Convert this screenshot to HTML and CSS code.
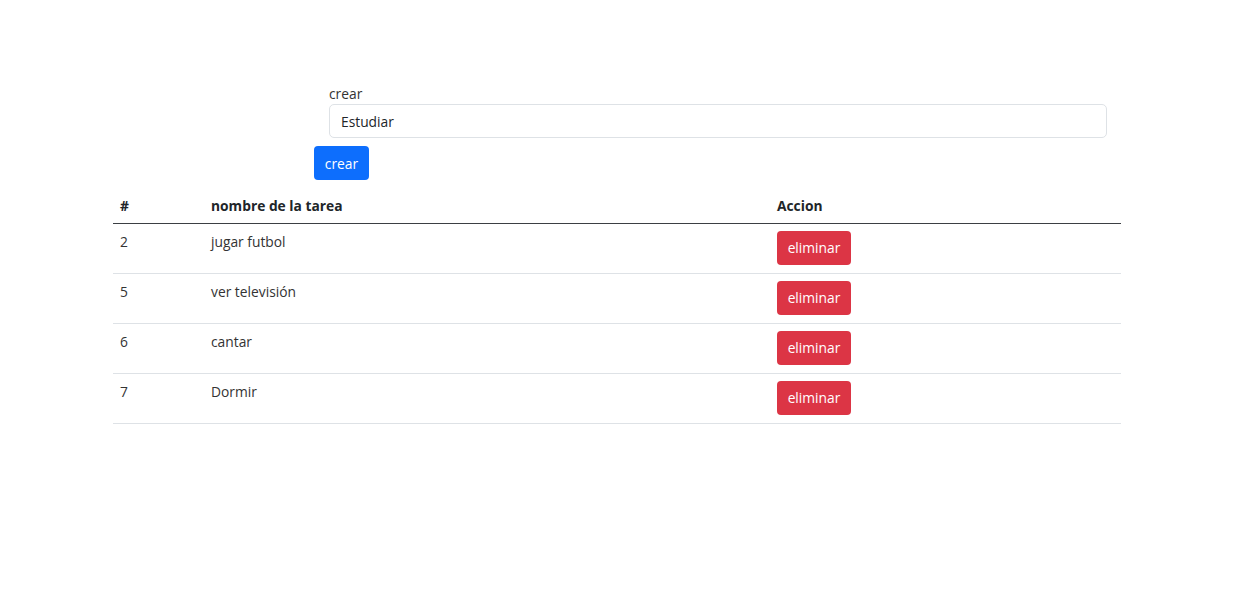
FILE: index.html
```html
<!DOCTYPE html>
<html lang="es">
<head>
<meta charset="utf-8">
<title>Tareas</title>
<link rel="stylesheet" href="styles.css">
</head>
<body>
<div class="page">
  <form class="form">
    <div class="field">
      <label class="label" for="tarea">crear</label>
      <input class="input" id="tarea" type="text" value="Estudiar">
    </div>
    <button class="btn btn-primary" type="button">crear</button>
  </form>
  <table class="table">
    <thead>
      <tr><th class="c1">#</th><th class="c2">nombre de la tarea</th><th class="c3">Accion</th></tr>
    </thead>
    <tbody>
      <tr><td>2</td><td>jugar futbol</td><td><button class="btn btn-danger" type="button">eliminar</button></td></tr>
      <tr><td>5</td><td>ver televisión</td><td><button class="btn btn-danger" type="button">eliminar</button></td></tr>
      <tr><td>6</td><td>cantar</td><td><button class="btn btn-danger" type="button">eliminar</button></td></tr>
      <tr><td>7</td><td>Dormir</td><td><button class="btn btn-danger" type="button">eliminar</button></td></tr>
    </tbody>
  </table>
</div>
</body>
</html>
```
FILE: styles.css
```css
* { box-sizing: border-box; }
body {
  margin: 0;
  background: #fff;
  color: #212529;
  font-family: "Open Sans", "Noto Sans", sans-serif;
  font-size: 13.8px;
  line-height: 21.6px;
}
.page {
  padding: 83px 0 0 113px;
  width: 1121px;
}
.form {
  margin: 0 0 0 201px;
  display: flex;
  flex-direction: column;
  align-items: flex-start;
}
.field {
  margin-left: 15px;
  display: flex;
  flex-direction: column;
}
.label {
  display: block;
  height: 21px;
  color: #333;
}
.input {
  width: 778px;
  height: 34px;
  border: 1px solid #dee2e6;
  border-radius: 5px;
  padding: 0 11px;
  font-family: inherit;
  font-size: 13.8px;
  color: #212529;
  outline: none;
}
.btn {
  display: inline-block;
  height: 34px;
  border: 0;
  border-radius: 4px;
  padding: 0 10px;
  font-family: inherit;
  font-size: 13.8px;
  color: #fff;
  cursor: pointer;
}
.btn-primary {
  background: #0d6efd;
  margin-top: 8px;
  width: 55px;
}
.btn-danger {
  background: #dc3545;
  width: 74px;
}
.table {
  margin-top: 7px;
  width: 1008px;
  border-collapse: collapse;
}
.table th, .table td {
  text-align: left;
  vertical-align: top;
  padding: 7px 7px;
}
.table th {
  font-weight: 700;
  height: 36px;
  padding-top: 8px;
  padding-bottom: 6px;
  border-bottom: 1px solid #3b3f43;
}
.table td {
  height: 50px;
  border-bottom: 1px solid #dee2e6;
  color: #333;
}
.c1 { width: 91px; }
.c2 { width: 566px; }
```
